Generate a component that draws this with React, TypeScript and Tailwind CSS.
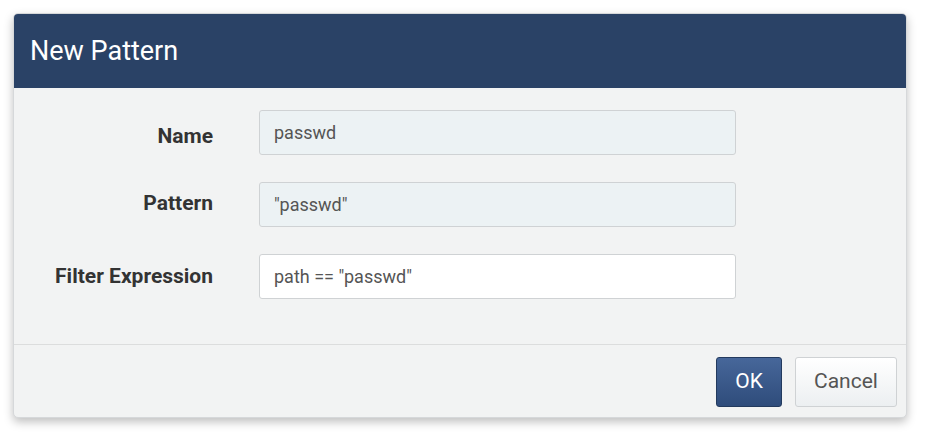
import React from "react";

const fields = [
  { label: "Name", value: "passwd", readOnly: true, pad: "pt-[16px]" },
  { label: "Pattern", value: "\"passwd\"", readOnly: true, pad: "pt-[11px]" },
  { label: "Filter Expression", value: "path == \"passwd\"", readOnly: false, pad: "pt-[12px]" },
];

export default function App() {
  return (
    <div
      className="w-[928px] h-[439px] bg-white pt-[13px] pl-[13px]"
      style={{ fontFamily: "Roboto, 'Liberation Sans', sans-serif" }}
    >
      <div className="w-[894px] h-[405px] flex flex-col rounded-[5px] overflow-hidden bg-[#f2f3f3] border border-[#d6d8da] shadow-[0_4px_10px_rgba(0,0,0,0.25)]">
        {/* Header */}
        <div className="h-[74px] shrink-0 bg-[#2a4266] flex items-center pl-[16px]">
          <h2 className="text-white text-[27px] leading-none">New Pattern</h2>
        </div>

        {/* Body */}
        <div className="flex-1 pt-[22px] flex flex-col gap-[27px]">
          {fields.map((f) => (
            <div key={f.label} className="flex items-start h-[45px]">
              <label
                className={`w-[199px] text-right text-[21px] leading-none font-bold text-[#333] ${f.pad}`}
              >
                {f.label}
              </label>
              <input
                readOnly
                value={f.value}
                className={`ml-[46px] w-[477px] h-[45px] rounded-[3px] border border-[#cfd2d4] px-[14px] text-[18px] text-[#555] outline-none ${
                  f.readOnly ? "bg-[#ecf2f4]" : "bg-white"
                }`}
              />
            </div>
          ))}
        </div>

        {/* Footer */}
        <div className="h-[73px] shrink-0 border-t border-[#dcdddd] flex justify-end items-start pt-[12px] pr-[9px] gap-[13px]">
          <button className="w-[66px] h-[50px] rounded-[3px] border border-[#233a5e] bg-gradient-to-b from-[#47679a] to-[#2f4c7b] text-white text-[21px]">
            OK
          </button>
          <button className="w-[102px] h-[50px] rounded-[3px] border border-[#cfd2d4] bg-gradient-to-b from-white to-[#eceff1] text-[#555] text-[21px]">
            Cancel
          </button>
        </div>
      </div>
    </div>
  );
}
